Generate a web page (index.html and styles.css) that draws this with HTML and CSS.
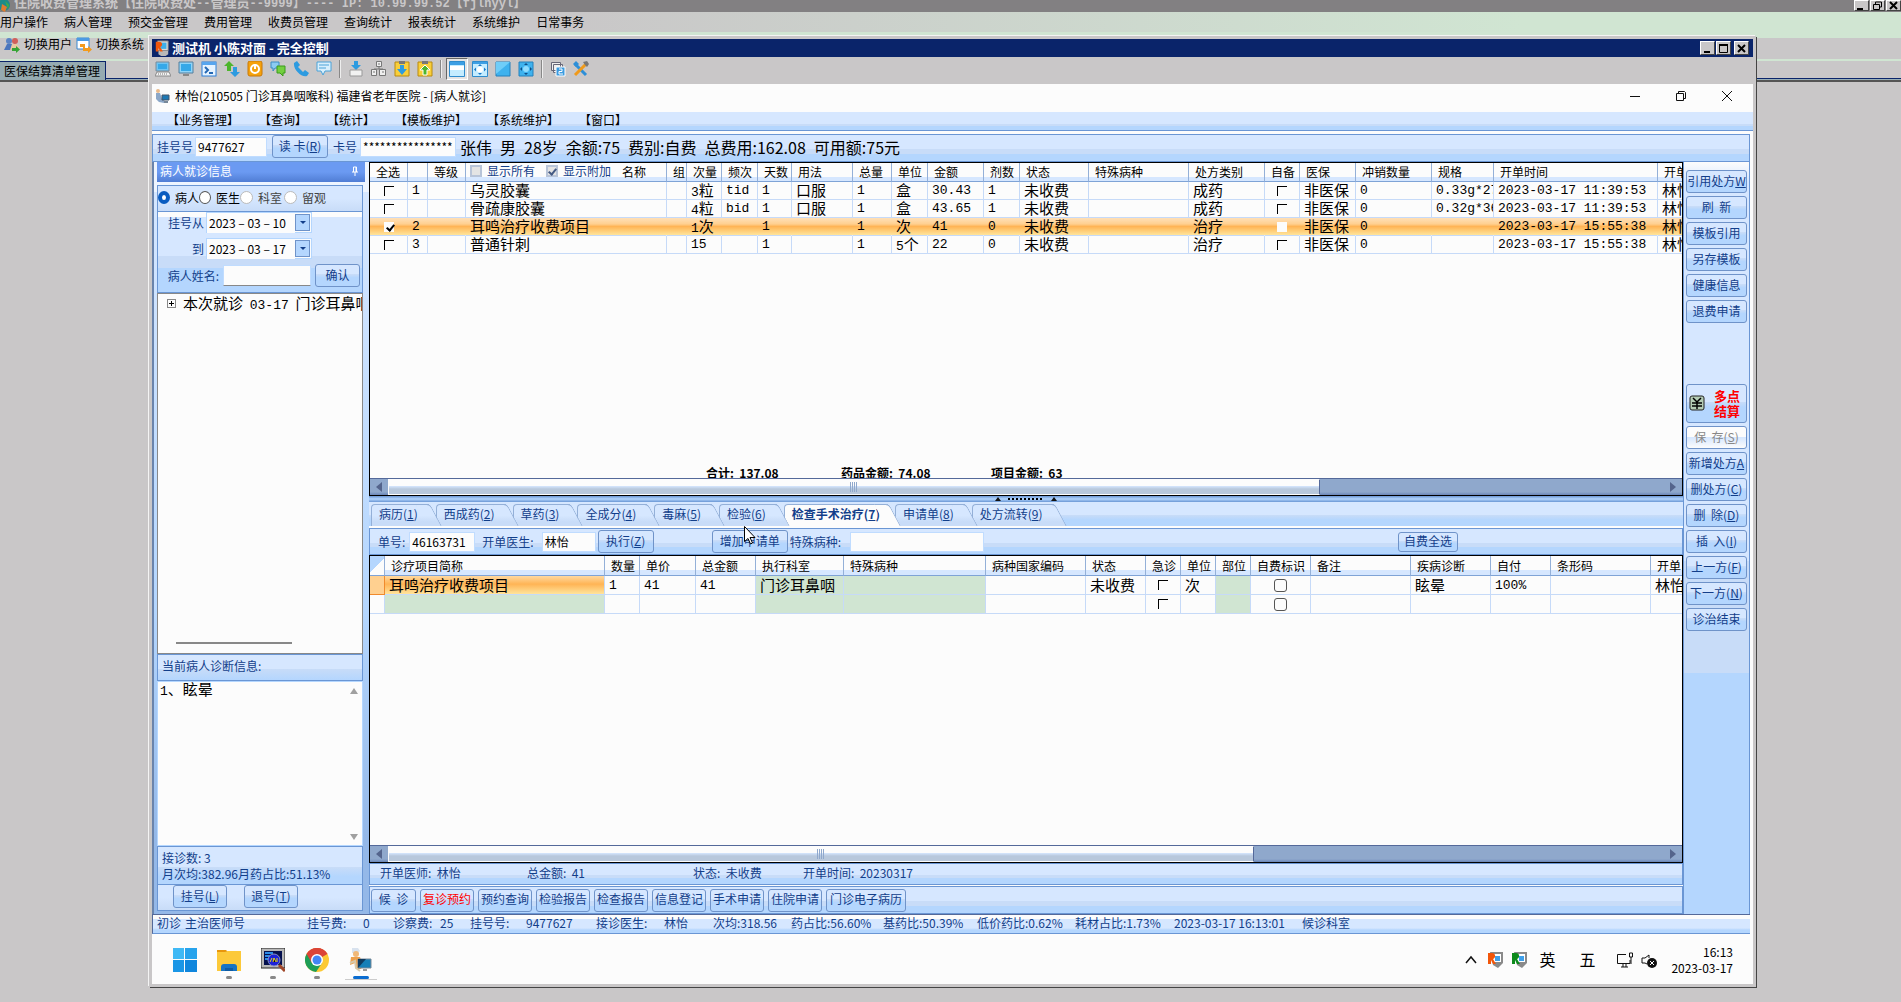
FILE: index.html
```html
<!DOCTYPE html>
<html lang="zh-CN">
<head>
  <meta charset="utf-8">
  <title>住院收费管理系统</title>
  <link rel="stylesheet" href="styles.css">
</head>
<body>
  <!-- 底层：住院收费系统 -->
  <div class="host">
    <div class="host-title">
      <svg class="host-logo" viewBox="0 0 12 12"><circle cx="4" cy="5" r="6" fill="#1d8a8a"/><path d="M2 4l5 3-2 5-4-2z" fill="#e07a30"/><path d="M5 1l4 4-1 4z" fill="#3cae4a"/></svg>
      <b>住院收费管理系统【住院收费处<span class="asc">--</span>管理员<span class="asc">--9999</span>】<span class="asc">---- IP: 10.99.99.52</span>【<span class="asc">fjlnyyl</span>】</b>
      <div class="win-btns host-btns">
        <button aria-label="最小化"><svg viewBox="0 0 11 9"><path d="M1 7h6v2H1z"/></svg></button>
        <button aria-label="还原"><svg viewBox="0 0 11 9"><path d="M3.500 3V1h6v5H8M1.500 3.500h6v5h-6z" fill="none" stroke="#000"/></svg></button>
        <button aria-label="关闭"><svg viewBox="0 0 11 9"><path d="M2 1l7 7M9 1L2 8" stroke="#000" stroke-width="2"/></svg></button>
      </div>
    </div>
    <div class="host-menu">
      <span>用户操作</span><span>病人管理</span><span>预交金管理</span><span>费用管理</span><span>收费员管理</span><span>查询统计</span><span>报表统计</span><span>系统维护</span><span>日常事务</span>
    </div>
    <div class="host-tools">
      <svg viewBox="0 0 16 16"><circle cx="5" cy="4" r="3" fill="#5b84c4"/><path d="M0 13l3-6h5l2 6z" fill="#4a76bd"/><circle cx="11" cy="4" r="3" fill="#d0605a"/><path d="M6 13l2-6h5l3 5z" fill="#e9c9a0"/><path d="M8 11h4V9l4 3.500-4 3.500v-2H8z" fill="#35a535"/></svg>
      <span>切换用户</span>
      <svg viewBox="0 0 16 16"><path d="M1 1h12v11H1z" fill="#fff" stroke="#3a86d0"/><path d="M1 1h12v3H1z" fill="#4b9be4"/><path d="M4 7h5v4h3V9l4 3.500-4 3.500v-2H7v-4H4z" fill="#f39a1c"/></svg>
      <span>切换系统</span>
    </div>
    <div class="host-tabs"><span>医保结算清单管理</span></div>
  </div>

  <!-- 远程控制窗口 -->
  <div class="remote">
    <div class="remote-title">
      <svg viewBox="0 0 16 18"><path d="M3 1h12v11H3z" fill="#d9d9d9" stroke="#777"/><path d="M6 3h7v7H6z" fill="#3fb0ea"/><path d="M4 12h11v4l-3 2H7l-3-2z" fill="#b8b8b8"/><path d="M1 13V2h4c4 0 4 5 1 6l3 5H6L4 9v4z" fill="#f2560a"/></svg>
      <b>测试机 小陈对面 - 完全控制</b>
      <div class="win-btns">
        <button aria-label="最小化"><svg viewBox="0 0 11 9"><path d="M2 7h6v2H2z"/></svg></button>
        <button aria-label="最大化"><svg viewBox="0 0 11 9"><path d="M1.500 1h8v7.500h-8z" fill="none" stroke="#000"/><path d="M1 0h9v2H1z"/></svg></button>
        <button class="gap" aria-label="关闭"><svg viewBox="0 0 11 9"><path d="M2 1l7 7M9 1L2 8" stroke="#000" stroke-width="2"/></svg></button>
      </div>
    </div>
    <div class="remote-tools">
      <svg viewBox="0 0 16 16"><path d="M1 1h13v9H1z" fill="#6fc4f2" stroke="#7a8a98"/><path d="M3 3h9v5H3z" fill="#35a8e8"/><path d="M2 11h12l2 4H0z" fill="#f4f4f4" stroke="#888"/><path d="M3 13h9" stroke="#777" stroke-dasharray="1 1"/></svg>
      <svg viewBox="0 0 16 16"><path d="M1 1h14v11H1z" fill="#8fd4f8" stroke="#557f9d"/><path d="M3 3h10v7H3z" fill="#35a8e8"/><path d="M5 14h6" stroke="#888" stroke-width="2"/></svg>
      <svg viewBox="0 0 16 16"><rect x="1" y="1" width="14" height="14" fill="#e6f3ff" stroke="#2c7fd8"/><path d="M1 1h14v3H1z" fill="#57a5ee"/><path d="M4 6l3 3-3 3M8 12h4" fill="none" stroke="#2468b4" stroke-width="2"/></svg>
      <svg viewBox="0 0 16 16"><path d="M5 0l5 5H7v5H3V5H0z" fill="#4db52c"/><path d="M11 16l-5-5h3V6h4v5h3z" fill="#2d9be0"/></svg>
      <svg viewBox="0 0 16 16"><rect x="1" y="0" width="14" height="15" rx="2" fill="#f5a20c" stroke="#c87808"/><circle cx="8" cy="8" r="4" fill="none" stroke="#fff" stroke-width="2"/><path d="M8 3v5" stroke="#fff" stroke-width="2"/></svg>
      <svg viewBox="0 0 16 16"><path d="M1 1h8v6H5l-2 3V7H1z" fill="#8ccbf2" stroke="#3b8cc4"/><path d="M7 5h8v7h-2v3l-3-3H7z" fill="#73cf3f" stroke="#3a9a1c"/></svg>
      <svg viewBox="0 0 16 16"><path d="M1 2l3-2 3 4-2 2 5 5 2-2 4 3-2 3c-5 2-14-6-13-13z" fill="#2d9be0"/></svg>
      <svg viewBox="0 0 16 16"><path d="M1 1h14v9H9l-2 4-2-4H1z" fill="#d8effc" stroke="#4aa2d8"/><path d="M3 4h10M3 7h7" stroke="#4aa2d8"/></svg>
      <i class="sep"></i>
      <svg viewBox="0 0 16 16"><path d="M6 0h4v4h3L8 9 3 4h3z" fill="#2d9be0"/><path d="M2 9h12v6H2z" fill="#f2f2f2" stroke="#999"/></svg>
      <svg viewBox="0 0 16 16"><g fill="#eee" stroke="#777"><path d="M5.500.500h5v5h-5zM.500 8.500h5v6h-5zM8.500 8.500h6v6h-6z"/></g><path d="M8 6v2M3 8h9M7 3h2M2 11h2M11 11h2" stroke="#777"/></svg>
      <svg viewBox="0 0 16 16"><path d="M1 1h14v14H1z" fill="#f9cf3a" stroke="#b88a10"/><path d="M5 0h6v3H5z" fill="#777"/><path d="M6 4h4v4h3l-5 6-5-6h3z" fill="#2d9be0"/></svg>
      <svg viewBox="0 0 16 16"><path d="M1 1h14v14H1z" fill="#f9cf3a" stroke="#b88a10"/><path d="M5 0h6v3H5z" fill="#777"/><path d="M8 4l5 5h-3v5H6V9H3z" fill="#4db52c" stroke="#fff"/></svg>
      <i class="sep"></i>
      <span class="pressed"><svg viewBox="0 0 16 16"><path d="M.500.500h15v15H.500z" fill="#c4ecff" stroke="#2f8ccd"/><path d="M1 1h14v3H1z" fill="#3d9fe4"/><path d="M1 5h14v4H1z" fill="#fff"/></svg></span>
      <svg viewBox="0 0 16 16"><path d="M.500.500h15v15H.500z" fill="#c4ecff" stroke="#2f8ccd"/><path d="M1 1h14v2H1z" fill="#3d9fe4"/><path d="M8 3l2 2H6zM8 14l2-2H6zM2 8.500l2-2v4zM14 8.500l-2-2v4z" fill="#1878c8"/><circle cx="8" cy="8.500" r="3" fill="#fff"/></svg>
      <svg viewBox="0 0 16 16"><path d="M1 1h14v14H1z" fill="#3fb2ee" stroke="#2480bc"/><path d="M1 1h14L1 13z" fill="#6fcdf8"/></svg>
      <svg viewBox="0 0 16 16"><path d="M1 1h14v14H1z" fill="#3fb2ee" stroke="#2480bc"/><path d="M8 2l2 2H6zM8 14l2-2H6zM2 8l2-2v4zM14 8l-2-2v4z" fill="#104e88"/><circle cx="8" cy="8" r="3" fill="#8fdcff"/></svg>
      <i class="sep"></i>
      <svg viewBox="0 0 16 16"><path d="M1.500 1.500h9v8h-9zM3.500 3.500h9v8h-9z" fill="#eee" stroke="#667"/><path d="M6 6h9v9H6z" fill="#3b9be0" stroke="#fff"/><path d="M9 8h3v2.500H9V13h4" fill="none" stroke="#fff"/></svg>
      <svg viewBox="0 0 16 16"><path d="M2 3l11 11" stroke="#2d8fd8" stroke-width="3"/><path d="M0 3l3-3 3 3-3 3z" fill="#2d8fd8"/><path d="M14 2L2 14" stroke="#f09a1a" stroke-width="3"/><path d="M10 1l4-1 2 3-2 3-2-2z" fill="#777"/></svg>
    </div>

    <div class="app-title">
      <svg viewBox="0 0 16 16"><circle cx="4" cy="3" r="2" fill="#e8b98a"/><path d="M2 5h4l2 6 3 2-1 2-5-1-3-3z" fill="#8ba7c8"/><path d="M8 7h7v5H8z" fill="#1c78b4" stroke="#456"/><path d="M10 13h4v2h-4z" fill="#789"/></svg>
      <span>林怡(210505 门诊耳鼻咽喉科) 福建省老年医院 - [病人就诊]</span>
      <div class="app-ctrl">
        <svg viewBox="0 0 12 12"><path d="M1 6.500h10" stroke="#111"/></svg>
        <svg viewBox="0 0 12 12"><path d="M1.500 3.500h7v7h-7zM3.500 3V1.500h6l1 1v6H9" fill="none" stroke="#111"/></svg>
        <svg viewBox="0 0 12 12"><path d="M1 1l10 10M11 1L1 11" stroke="#111"/></svg>
      </div>
    </div>
    <div class="app-menu">
      <span>【业务管理】</span><span>【查询】</span><span>【统计】</span><span>【模板维护】</span><span>【系统维护】</span><span>【窗口】</span>
    </div>

    <div class="patient bar">
      <label for="regno">挂号号</label><input id="regno" class="w-reg" type="text" value="9477627">
      <button class="btn">读 卡(<u>R</u>)</button>
      <label for="card">卡号</label><input id="card" class="w-card" type="text" value="****************">
      <div class="who"><span>张伟</span><span>男</span><span>28岁</span><span>余额:75</span><span>费别:自费</span><span>总费用:162.08</span><span>可用额:75元</span></div>
    </div>

    <div class="body">
      <aside class="left">
        <div class="left-head"><span>病人就诊信息</span><svg viewBox="0 0 8 10"><path d="M1 6h6M2.500 6V1h3v5M5 1v5M4 6v4" stroke="#fff" fill="none"/></svg></div>
        <div class="kinds">
          <label><input type="radio" name="kind" checked>病人</label>
          <label><input type="radio" name="kind">医生</label>
          <label class="off"><input type="radio" name="kind" disabled>科室</label>
          <label class="off"><input type="radio" name="kind" disabled>留观</label>
        </div>
        <div class="query">
          <label for="from">挂号从</label>
          <div class="date"><input id="from" type="text" value="2023 – 03 – 10"><button aria-label="选择日期"></button></div>
          <label for="to">到</label>
          <div class="date"><input id="to" type="text" value="2023 – 03 – 17"><button aria-label="选择日期"></button></div>
          <label for="pname">病人姓名:</label>
          <div class="name-row"><input id="pname" type="text"><button class="btn">确认</button></div>
        </div>
        <div class="tree">
          <div class="node"><i class="plus"></i><span>本次就诊&nbsp; <span class="num">03-17</span>&nbsp; 门诊耳鼻咽</span></div>
          <div class="tree-scroll"></div>
        </div>
        <div class="diag-head">当前病人诊断信息:</div>
        <div class="diag"><span><span class="num">1</span>、眩晕</span><i class="up"></i><i class="down"></i></div>
        <div class="stat"><div>接诊数: 3</div><div>月次均:382.96月药占比:51.13%</div></div>
        <div class="left-btns"><button class="btn">挂号(<u>L</u>)</button><button class="btn">退号(<u>T</u>)</button></div>
      </aside>

      <main class="main">
        <section class="grid-box top">
          <table class="orders">
            <colgroup><col class="c38"><col class="c20"><col class="c38"><col class="c201"><col class="c20"><col class="c35"><col class="c36"><col class="c34"><col class="c61"><col class="c39"><col class="c36"><col class="c56"><col class="c36"><col class="c69"><col class="c100"><col class="c76"><col class="c35"><col class="c56"><col class="c76"><col class="c62"><col class="c164"><col></colgroup>
            <thead>
              <tr><th>全选</th><th></th><th>等级</th><th class="name-th"><div><label><input type="checkbox" class="box">显示所有</label><label><input type="checkbox" class="box" checked>显示附加</label><span>名称</span></div></th><th>组</th><th>次量</th><th>频次</th><th>天数</th><th>用法</th><th>总量</th><th>单位</th><th>金额</th><th>剂数</th><th>状态</th><th>特殊病种</th><th>处方类别</th><th>自备</th><th>医保</th><th>冲销数量</th><th>规格</th><th>开单时间</th><th>开单</th></tr>
            </thead>
            <tbody>
              <tr><td class="ck"><input type="checkbox" aria-label="选择"></td><td class="num">1</td><td></td><td>乌灵胶囊</td><td></td><td><span class="num">3</span>粒</td><td class="num">tid</td><td class="num">1</td><td>口服</td><td class="num">1</td><td>盒</td><td class="num">30.43</td><td class="num">1</td><td>未收费</td><td></td><td>成药</td><td class="ck"><input type="checkbox" aria-label="自备"></td><td>非医保</td><td class="num">0</td><td class="num">0.33g*27</td><td class="num">2023-03-17 11:39:53</td><td>林怡</td></tr>
              <tr><td class="ck"><input type="checkbox" aria-label="选择"></td><td></td><td></td><td>骨疏康胶囊</td><td></td><td><span class="num">4</span>粒</td><td class="num">bid</td><td class="num">1</td><td>口服</td><td class="num">1</td><td>盒</td><td class="num">43.65</td><td class="num">1</td><td>未收费</td><td></td><td>成药</td><td class="ck"><input type="checkbox" aria-label="自备"></td><td>非医保</td><td class="num">0</td><td class="num">0.32g*36</td><td class="num">2023-03-17 11:39:53</td><td>林怡</td></tr>
              <tr class="sel"><td class="ck"><input type="checkbox" aria-label="选择" checked></td><td class="num">2</td><td></td><td>耳鸣治疗收费项目</td><td></td><td><span class="num">1</span>次</td><td></td><td class="num">1</td><td></td><td class="num">1</td><td>次</td><td class="num">41</td><td class="num">0</td><td>未收费</td><td></td><td>治疗</td><td class="ck"><input type="checkbox" aria-label="自备"></td><td>非医保</td><td class="num">0</td><td></td><td class="num">2023-03-17 15:55:38</td><td>林怡</td></tr>
              <tr><td class="ck"><input type="checkbox" aria-label="选择"></td><td class="num">3</td><td></td><td>普通针刺</td><td></td><td class="num">15</td><td></td><td class="num">1</td><td></td><td class="num">1</td><td><span class="num">5</span>个</td><td class="num">22</td><td class="num">0</td><td>未收费</td><td></td><td>治疗</td><td class="ck"><input type="checkbox" aria-label="自备"></td><td>非医保</td><td class="num">0</td><td></td><td class="num">2023-03-17 15:55:38</td><td>林怡</td></tr>
            </tbody>
          </table>
          <div class="totals"><span>合计:&nbsp; 137.08</span><span>药品金额:&nbsp; 74.08</span><span>项目金额:&nbsp; 63</span></div>
          <div class="hscroll"><i class="arr l"></i><div class="thumb long"><i></i></div><i class="arr r"></i></div>
        </section>

        <div class="splitter"><i></i><b></b><i></i></div>

        <nav class="tabs">
          <button>病历(<u>1</u>)</button><button>西成药(<u>2</u>)</button><button>草药(<u>3</u>)</button><button>全成分(<u>4</u>)</button><button>毒麻(<u>5</u>)</button><button>检验(<u>6</u>)</button><button class="on">检查手术治疗(<u>7</u>)</button><button>申请单(<u>8</u>)</button><button>处方流转(<u>9</u>)</button>
        </nav>
        <div class="sheet bar">
          <label for="no">单号:</label><input id="no" class="w-no" type="text" value="46163731">
          <label for="doc">开单医生:</label><input id="doc" class="w-doc" type="text" value="林怡">
          <button class="btn">执行(<u>Z</u>)</button>
          <div class="add"><button class="btn">增加申请单</button>
            <svg class="cursor" viewBox="0 0 12 19"><path d="M.500.500v15l3.500-3 2.500 5.500 2-1-2.500-5.500h5z" fill="#fff" stroke="#000"/></svg></div>
          <label for="dis">特殊病种:</label><input id="dis" class="w-dis" type="text">
          <button class="btn self">自费全选</button>
        </div>

        <section class="grid-box low">
          <table class="items">
            <colgroup><col class="c15"><col class="c220"><col class="c35"><col class="c56"><col class="c60"><col class="c88"><col class="c142"><col class="c100"><col class="c60"><col class="c35"><col class="c35"><col class="c35"><col class="c60"><col class="c100"><col class="c80"><col class="c60"><col class="c100"><col></colgroup>
            <thead>
              <tr><th class="corner"></th><th>诊疗项目简称</th><th>数量</th><th>单价</th><th>总金额</th><th>执行科室</th><th>特殊病种</th><th>病种国家编码</th><th>状态</th><th>急诊</th><th>单位</th><th>部位</th><th>自费标识</th><th>备注</th><th>疾病诊断</th><th>自付</th><th>条形码</th><th>开单</th></tr>
            </thead>
            <tbody>
              <tr><td class="mark"></td><td class="hot">耳鸣治疗收费项目</td><td class="num">1</td><td class="num">41</td><td class="num">41</td><td class="green">门诊耳鼻咽</td><td class="green"></td><td></td><td>未收费</td><td class="ck"><input type="checkbox" aria-label="急诊"></td><td>次</td><td class="green"></td><td class="ck"><input type="checkbox" class="round" aria-label="自费标识"></td><td></td><td>眩晕</td><td class="num">100%</td><td></td><td>林怡</td></tr>
              <tr><td></td><td class="green"></td><td></td><td></td><td></td><td class="green"></td><td class="green"></td><td></td><td></td><td class="ck"><input type="checkbox" aria-label="急诊"></td><td></td><td class="green"></td><td class="ck"><input type="checkbox" class="round" aria-label="自费标识"></td><td></td><td></td><td></td><td></td><td></td></tr>
            </tbody>
          </table>
          <div class="hscroll"><i class="arr l"></i><div class="thumb short"><i></i></div><i class="arr r"></i></div>
        </section>
        <div class="info bar"><span>开单医师: &nbsp;林怡</span><span>总金额: &nbsp;41</span><span>状态: &nbsp;未收费</span><span>开单时间: &nbsp;20230317</span></div>
        <div class="actions bar">
          <button class="btn narrow">候&nbsp; 诊</button><button class="btn red">复诊预约</button><button class="btn">预约查询</button><button class="btn">检验报告</button><button class="btn">检查报告</button><button class="btn">信息登记</button><button class="btn">手术申请</button><button class="btn">住院申请</button><button class="btn wide">门诊电子病历</button>
        </div>
      </main>

      <aside class="right">
        <div class="right-in">
          <button class="btn">引用处方<u>W</u></button><button class="btn">刷&nbsp; 新</button><button class="btn">模板引用</button><button class="btn">另存模板</button><button class="btn">健康信息</button><button class="btn">退费申请</button>
          <button class="btn pay"><svg viewBox="0 0 16 16"><rect x="1" y="1" width="14" height="14" rx="2" fill="#b4ccb4" stroke="#222"/><path d="M4 3l4 4 4-4M3 8h10M3 11h10M8 7v7" stroke="#000" stroke-width="1.500" fill="none"/></svg><span>多点<br>结算</span></button>
          <button class="btn off" disabled>保&nbsp; 存(<u>S</u>)</button><button class="btn">新增处方<u>A</u></button><button class="btn">删处方(<u>C</u>)</button><button class="btn">删&nbsp; 除(<u>D</u>)</button><button class="btn">插&nbsp; 入(<u>I</u>)</button><button class="btn">上一方(<u>F</u>)</button><button class="btn">下一方(<u>N</u>)</button><button class="btn">诊治结束</button>
        </div>
      </aside>
    </div>

    <div class="status">
      <span>初诊</span><span>主治医师号</span><span>挂号费:</span><span>0</span><span>诊察费:</span><span>25</span><span>挂号号:</span><span>9477627</span><span>接诊医生:</span><span>林怡</span><span>次均:318.56</span><span>药占比:56.60%</span><span>基药比:50.39%</span><span>低价药比:0.62%</span><span>耗材占比:1.73%</span><span>2023-03-17 16:13:01</span><span>候诊科室</span>
    </div>

    <div class="taskbar">
      <div class="task"><svg viewBox="0 0 24 24"><g fill="#0f86dd"><path d="M0 0h11v11H0z" fill="#3fb9f5"/><path d="M12 0h12v11H12z" fill="#27a3ec"/><path d="M0 12h11v12H0z" fill="#1a96e6"/><path d="M12 12h12v12H12z"/></g></svg></div>
      <div class="task run"><svg viewBox="0 0 24 24"><path d="M0 2h9l3 3H0z" fill="#e8960c"/><path d="M0 4h8l3-1h13v20H0z" fill="#fcc93a"/><path d="M4 23v-4q0-3 3-3h10q3 0 3 3v4z" fill="#1673c4"/><path d="M8 20h8v3H8z" fill="#0d5ba4"/></svg></div>
      <div class="task run"><svg viewBox="0 0 24 24"><path d="M0 0h24v20H0z" fill="#b8b8b8" stroke="#222"/><path d="M3 3h18v14H3z" fill="#04104e"/><path d="M4 5h8M4 8h5M4 11h5" stroke="#2b8be8" stroke-width="2"/><circle cx="13" cy="12" r="6" fill="#1b22d8" stroke="#8890c8"/><path d="M9 14l2-4M12 14l1-4 2 4M16 10v4" stroke="#e8d820"/><path d="M18 17l6 6" stroke="#a04628" stroke-width="3"/></svg></div>
      <div class="task run"><svg viewBox="0 0 24 24"><circle cx="12" cy="12" r="12" fill="#fcc934"/><path d="M12 12L1.600 6A12 12 0 0 1 22.400 6z" fill="#db4437"/><path d="M12 12L1.600 6A12 12 0 0 0 11 24l6-9z" fill="#1e9e57"/><path d="M12 6h10.400A12 12 0 0 0 1.600 6l5.200 9z" fill="#db4437"/><circle cx="12" cy="12" r="6" fill="#fff"/><circle cx="12" cy="12" r="4.500" fill="#4285f4"/></svg></div>
      <div class="task cur"><svg viewBox="0 0 24 24"><path d="M3 0h6l2 3-2 2H3z" fill="#d8e2ee"/><circle cx="7" cy="6" r="3" fill="#f0b878"/><path d="M2 9h9l3 8-2 4H7l-1-6-5 2z" fill="#eda04c"/><path d="M1 15l5-2 1 7 4 3" stroke="#d8c8a8" fill="none" stroke-width="2"/><path d="M9 11h13v9H9z" fill="#147fb8" stroke="#7a8a98"/><path d="M9 20l8-9h-8z" fill="#0f3b60"/><path d="M14 21h4v2h-4z" fill="#999"/></svg></div>
      <div class="tray">
        <svg class="chev" viewBox="0 0 12 16"><path d="M1 11l5-6 5 6" fill="none" stroke="#111" stroke-width="1.500"/></svg>
        <svg viewBox="0 0 16 16"><path d="M3 0h13v11l-5 5-5-3z" fill="#8a8a8a"/><path d="M6 2h8v8H6z" fill="#fff"/><path d="M8 4h5v5H8z" fill="#3fa0ea"/><path d="M1 12V1h4c4 0 4 5 1 6l3 5H6L4 8v4z" fill="#f2560a"/></svg>
        <svg viewBox="0 0 16 16"><path d="M3 0h13v11l-5 5-5-3z" fill="#8a8a8a"/><path d="M6 2h8v8H6z" fill="#fff"/><path d="M8 4h5v5H8z" fill="#3fa0ea"/><path d="M1 12V1h4c4 0 4 5 1 6l3 5H6L4 8v4z" fill="#0d8a1c"/></svg>
        <span>英</span><span>五</span>
        <svg viewBox="0 0 16 16"><path d="M9 2.500H.500v9H13V8M4 15h7M6 12v3M9 12v3M12.500 1h3v4h-3zM14 5v7" fill="none" stroke="#111"/></svg>
        <svg viewBox="0 0 16 16"><path d="M1 6h3l4-3v3M1 6v5h3l2 1" fill="none" stroke="#111"/><circle cx="11" cy="11" r="5" fill="#111"/><path d="M9 9l4 4M13 9l-4 4" stroke="#fff"/></svg>
        <div class="clock">16:13<br>2023-03-17</div>
      </div>
    </div>
  </div>
</body>
</html>
```

FILE: styles.css
```css
* {
  box-sizing: border-box;
}

body {
  margin: 0;
  height: 100vh;
  overflow: hidden;
  background: #c9c7c8;
  color: #000;
  font: 12px/16px "Noto Sans CJK SC", sans-serif;
  white-space: nowrap;
}

button, input {
  font: inherit;
  color: inherit;
  margin: 0;
}

svg {
  display: block;
  width: 16px;
  height: 16px;
  flex: none;
}

.num {
  font: 13px/16px "Liberation Mono", monospace;
}

span.num {
  line-height: 0;
}

/* 底层窗口 */
.host-title {
  display: flex;
  align-items: center;
  height: 12px;
  background: #828082;
  color: #c9c7c8;
  font-size: 13px;
  line-height: 12px;
}

.host-title b {
  margin-top: -6px;
}

.host-title .asc {
  font: bold 12px/12px "Liberation Mono", monospace;
  white-space: pre;
}

.host-logo {
  width: 12px;
  height: 12px;
  margin-right: 2px;
}

.host-btns {
  height: 12px;
}

.host-menu {
  display: flex;
  gap: 16px;
  height: 26px;
  padding-top: 2px;
  background: linear-gradient(90deg, #c9c7c8 30%, #d0e5d2 80%);
  border-bottom: 6px solid #d0e5d2;
}

.host-tools {
  display: flex;
  align-items: center;
  gap: 4px;
  height: 21px;
  padding: 0 0 8px 4px;
}

.host-tools span {
  margin-bottom: 1px;
}

.host-tabs {
  height: 23px;
  border-top: 2px solid #d0e5d2;
  border-bottom: 2px solid #555;
  background: linear-gradient(#c9c7c8 17px, #0a246a 17px, #0a246a 18px, #9ab0b8 18px);
}

.host-tabs span {
  display: inline-block;
  width: 106px;
  height: 19px;
  padding-left: 4px;
  line-height: 17px;
  background: #96abb1;
  border: 1px solid #0a246a;
  border-width: 1px 1px 0 0;
}

.win-btns {
  display: flex;
  margin-left: auto;
  gap: 1px;
}

.win-btns button {
  width: 15px;
  height: 14px;
  padding: 1px;
  background: #c9c7c8;
  border: 1px solid;
  border-color: #fff #444 #444 #fff;
}

.host-btns button {
  height: 11px;
  padding: 0 1px;
}

.win-btns svg {
  width: 11px;
  height: 9px;
}

.win-btns .gap {
  margin: 0 4px 0 2px;
}

/* 远程窗口 */
.remote {
  position: absolute;
  left: 149px;
  top: 36px;
  right: 145px;
  bottom: 15px;
  display: flex;
  flex-direction: column;
  background: #fcfcfc;
  border: 3px solid #c9c7c8;
  box-shadow: 1px 1px 0 #444, -1px -1px 0 #f4f4f4;
}

.remote-title {
  display: flex;
  align-items: center;
  height: 18px;
  padding-left: 2px;
  background: #0a246a;
  color: #fff;
  font-size: 13px;
}

.remote-title b {
  margin-left: 2px;
}

.remote-tools {
  display: flex;
  align-items: center;
  gap: 7px;
  height: 27px;
  padding: 0 0 3px 3px;
  background: #c9c7c8;
}

.sep {
  width: 2px;
  height: 18px;
  border-left: 1px solid #888;
  border-right: 1px solid #eee;
}

.pressed {
  padding: 2px;
  margin: 0 -3px;
  border: 1px solid;
  border-color: #666 #fff #fff #666;
  background: #e4e4e4;
}

.app-title {
  display: flex;
  align-items: center;
  gap: 5px;
  height: 28px;
  padding: 0 20px 5px 2px;
}

.app-ctrl {
  display: flex;
  gap: 34px;
  margin-left: auto;
}

.app-ctrl svg {
  width: 12px;
  height: 12px;
}

.app-menu {
  display: flex;
  gap: 20px;
  height: 19px;
  padding-left: 15px;
  background: linear-gradient(#d6e7ff 12px, #c8dcf8 12px, #c8dcf8 14px, #b4d6fe 14px);
  border-bottom: 1px solid #6a96d4;
}

.bar {
  display: flex;
  align-items: center;
  background: linear-gradient(#d6e7ff 55%, #c8dcf8 55%, #c8dcf8 72%, #b4d6fe 72%);
  border: 1px solid #6a96d4;
  color: #123e8a;
}

.bar input, .query input {
  height: 20px;
  padding: 0 2px;
  background: #fcfcfc;
  border: 1px solid #c0dcff;
  color: #000;
  outline: none;
}

.btn {
  height: 23px;
  padding: 0 0 2px;
  text-align: center;
  background: linear-gradient(#d6e7ff 45%, #c8dcf8 45%, #b4d6fe 60%);
  border: 1px solid #6f93c9;
  border-radius: 3px;
  color: #123e8a;
  line-height: 18px;
}

.patient {
  height: 28px;
  margin: 3px 3px 0 0;
  padding: 0 4px 3px;
}

.patient .btn {
  width: 56px;
  margin: 0 5px;
}

.w-reg {
  width: 72px;
  margin-left: 2px;
}

.w-card {
  width: 96px;
  margin: 0 4px 0 3px;
}

.who {
  display: flex;
  gap: 8px;
  color: #000;
  font-size: 16px;
}

.body {
  flex: 1;
  display: grid;
  grid-template-columns: 217px 1fr 70px;
  min-height: 0;
}

/* 左栏 */
.left {
  display: flex;
  flex-direction: column;
  min-height: 0;
  padding: 0 6px 3px 5px;
  background: linear-gradient(#eef5ff 30px, #d6e7ff 30px, #b4d6fe 60%, #94b8e8 90%);
  border-left: 2px solid #6a84ac;
  color: #123e8a;
}

.left > div {
  margin-left: -2px;
}

.left-head {
  display: flex;
  align-items: center;
  justify-content: space-between;
  height: 20px;
  margin-right: -2px;
  padding: 0 6px 3px 3px;
  background: linear-gradient(#6b9af2 50%, #507dd4);
  color: #fff;
}

.left-head svg {
  width: 8px;
  height: 10px;
}

.kinds {
  display: flex;
  align-items: center;
  height: 27px;
  margin-top: 3px;
  padding-bottom: 2px;
  background: linear-gradient(#d6e7ff 50%, #c8dcf8);
  border: 1px solid #6a96d4;
  color: #000;
}

.kinds label {
  display: flex;
  align-items: center;
  gap: 5px;
  width: 41px;
}

.kinds .off {
  width: 44px;
  color: #444;
}

.kinds input {
  appearance: none;
  width: 13px;
  height: 13px;
  border: 1px solid #555;
  border-radius: 50%;
  background: #fff;
}

.kinds input:checked {
  border: 4px solid #0a5cc0;
}

.kinds input:disabled {
  border-color: #bbb;
}

.query {
  display: grid;
  grid-template-columns: 45px 1fr;
  column-gap: 2px;
  row-gap: 5px;
  align-items: center;
  align-content: start;
  height: 81px;
  padding: 0 1px;
  background: linear-gradient(#fcfcfc 5px, #d6e7ff 5px, #d6e7ff 55%, #c8dcf8 55%, #c8dcf8 70%, #b4d6fe 70%);
  border: 1px solid #6a96d4;
  border-top: 0;
}

.query label {
  text-align: right;
}

.date {
  display: flex;
  align-items: center;
  width: 106px;
  height: 21px;
  background: #fcfcfc;
  border: 1px solid #b4d6fe;
}

.date input {
  width: 88px;
  border: 0;
}

.date button {
  width: 15px;
  height: 17px;
  padding: 0;
  background: #b4d6fe;
  border: 1px solid #6f93c9;
}

.date button::after, .splitter i, .up, .down {
  content: "";
  display: block;
  width: 0;
  margin: auto;
  border: 3px solid transparent;
  border-top-color: #123e8a;
  border-bottom: 0;
}

.name-row {
  display: flex;
  align-items: center;
  gap: 4px;
}

.query .name-row input {
  width: 88px;
  margin-left: 17px;
  height: 21px;
  border-bottom-color: #888;
}

.query label[for="pname"] {
  width: 60px;
}

.name-row .btn {
  width: 45px;
}

.tree {
  flex: 359 1 0;
  display: flex;
  flex-direction: column;
  justify-content: space-between;
  padding: 0 0 9px;
  background: #fcfcfc;
  border: 1px solid #888;
  overflow: hidden;
}

.node {
  display: flex;
  align-items: center;
  gap: 7px;
  padding-left: 9px;
  color: #000;
  font-size: 15px;
  line-height: 18px;
}

.plus {
  width: 9px;
  height: 9px;
  flex: none;
  border: 1px solid #888;
  background: linear-gradient(#000, #000) center/5px 1px no-repeat, linear-gradient(#000, #000) center/1px 5px no-repeat;
}

.tree-scroll {
  width: 116px;
  height: 2px;
  margin-left: 18px;
  background: #888;
}

.diag-head {
  height: 27px;
  padding: 3px 4px;
  background: linear-gradient(#d6e7ff 55%, #c8dcf8 55%, #b4d6fe);
  border: 1px solid #6a96d4;
}

.diag {
  flex: 167 1 0;
  position: relative;
  padding-left: 2px;
  background: #fcfcfc;
  border: 1px solid #b4d6fe;
  color: #000;
  font-size: 15px;
  line-height: 14px;
}

.up, .down {
  position: absolute;
  right: 4px;
  border: 4px solid transparent;
  border-width: 6px 4px 0;
  border-top-color: #a0a0a0;
}

.up {
  top: 6px;
  transform: rotate(180deg);
}

.down {
  bottom: 5px;
}

.stat {
  height: 39px;
  padding: 3px 4px;
  background: linear-gradient(#d6e7ff 55%, #c8dcf8 55%, #b4d6fe 80%);
  border: 1px solid #6a96d4;
  line-height: 16px;
}

.left-btns {
  display: flex;
  gap: 17px;
  height: 26px;
  padding: 0 15px;
  background: linear-gradient(#d6e7ff 50%, #c8dcf8);
  border: 1px solid #6a96d4;
  border-top: 0;
}

.left-btns .btn {
  width: 54px;
}

/* 中间 */
.main {
  display: flex;
  flex-direction: column;
  min-width: 0;
  min-height: 0;
}

.grid-box {
  display: flex;
  flex-direction: column;
  min-height: 0;
  background: #fcfcfc;
  border: 1px solid #000;
  overflow: hidden;
}

.top {
  flex: 335 1 0;
}

.low {
  flex: 308 1 0;
}

table {
  width: 100%;
  table-layout: fixed;
  border-collapse: separate;
  border-spacing: 0;
}

th, td {
  padding: 0;
  text-align: left;
  font-weight: normal;
  overflow: hidden;
}

th {
  height: 19px;
  padding-left: 6px;
  line-height: 18px;
  background: linear-gradient(#fcfcfc 14px, #d6e7ff 14px);
  border-right: 1px solid #94b0d8;
  border-bottom: 1px solid #7fa3d6;
}

td {
  height: 18px;
  padding-left: 4px;
  font-size: 15px;
  line-height: 15px;
  padding-bottom: 2px;
  border-right: 1px solid #c6daf8;
  border-bottom: 1px solid #c6daf8;
}

td.num {
  padding-bottom: 0;
  line-height: 17px;
}

.items th {
  height: 20px;
}

.items td {
  height: 19px;
}

.name-th {
  padding-left: 4px;
}

.name-th div {
  display: flex;
  height: 18px;
}

.name-th label {
  display: flex;
  align-items: center;
  gap: 5px;
  width: 76px;
  line-height: 14px;
  padding-bottom: 2px;
  color: #123e8a;
}

th:last-child, td:last-child {
  border-right: 0;
}

td.ck {
  padding: 0;
  text-align: center;
  line-height: 0;
}

td input {
  appearance: none;
  width: 10px;
  height: 10px;
  border: 1px solid #000;
  border-width: 1px 0 0 1px;
}

.sel td {
  border-right-color: transparent;
  background: linear-gradient(#ffe0b8, #ffd090 35%, #ffb455 50%, #ffc870 70%, #ffe49c);
}

.sel input {
  background: #fcfcfc;
  border-color: #fcfcfc;
}

.sel input:checked::after, .box:checked::after {
  content: "";
  display: block;
  width: 3px;
  height: 6px;
  margin-left: 3px;
  border: solid #000;
  border-width: 0 2px 2px 0;
  transform: rotate(40deg);
}

.box {
  appearance: none;
  width: 12px;
  height: 12px;
  border: 2px solid #b8c4d8;
  background: #e4e4e4;
}

.box:checked::after {
  margin-left: 2px;
  border-color: #445a84;
}

td input.round {
  width: 13px;
  height: 13px;
  border: 1px solid #555;
  border-radius: 3px;
}

.corner {
  background: linear-gradient(135deg, #b4d6fe 50%, #fcfcfc 50%);
}

.mark {
  background: #ffd090;
  border-color: #f08a2c;
}

.hot {
  background: linear-gradient(#ffd9a0, #ffb455 45%, #ffe49c);
}

.green {
  background: #d0e5d2;
}

.c15 { width: 15px; }
.c20 { width: 20px; }
.c34 { width: 34px; }
.c35 { width: 35px; }
.c36 { width: 36px; }
.c38 { width: 38px; }
.c39 { width: 39px; }
.c56 { width: 56px; }
.c60 { width: 60px; }
.c61 { width: 61px; }
.c62 { width: 62px; }
.c69 { width: 69px; }
.c76 { width: 76px; }
.c80 { width: 80px; }
.c88 { width: 88px; }
.c100 { width: 100px; }
.c142 { width: 142px; }
.c164 { width: 164px; }
.c201 { width: 201px; }
.c220 { width: 220px; }

.totals {
  display: grid;
  grid-template-columns: 135px 150px 1fr;
  height: 13px;
  margin-top: auto;
  padding-left: 336px;
  font-weight: bold;
  overflow: hidden;
}

.hscroll {
  display: flex;
  align-items: center;
  height: 17px;
  background: linear-gradient(#8fa8cc 13px, #6a86b8);
  border-top: 1px solid #54699a;
}

.low .hscroll {
  margin-top: auto;
}

.arr {
  width: 6px;
  margin: 0 6px;
  border: 5px solid transparent;
  border-left: 0;
  border-right: 6px solid #54648c;
}

.arr.r {
  margin-left: auto;
  transform: rotate(180deg);
}

.thumb {
  display: flex;
  justify-content: center;
  align-items: center;
  width: 71%;
  height: 16px;
  background: linear-gradient(#fcfcfc 6px, #d6e7ff 6px, #b8c8dc 9px);
  border: 1px solid #fcfcfc;
  border-right-color: #54699a;
}

.thumb.short {
  width: 66%;
}

.thumb i {
  width: 8px;
  height: 10px;
  background: repeating-linear-gradient(90deg, #8fa8cc 0, #8fa8cc 1px, transparent 1px, transparent 2px);
}

.splitter {
  display: flex;
  justify-content: center;
  align-items: center;
  gap: 7px;
  height: 6px;
  background: linear-gradient(#6a96d4, #b4d6fe, #6a96d4);
}

.splitter i {
  margin: 0;
  border: 3px solid transparent;
  border-top: 0;
  border-bottom: 4px solid #111;
}

.splitter b {
  width: 36px;
  height: 2px;
  background: repeating-linear-gradient(90deg, #000 0, #000 2px, transparent 2px, transparent 4px);
}

.tabs {
  display: flex;
  align-items: flex-end;
  height: 26px;
  padding-left: 2px;
  background: linear-gradient(#d6e7ff 55%, #c8dcf8 55%, #b4d6fe 75%);
  border-bottom: 2px solid #fcfcfc;
}

.tabs button {
  position: relative;
  height: 22px;
  margin-right: 7px;
  padding: 0 11px 3px 7px;
  background: linear-gradient(#d6e7ff 50%, #c8dcf8 80%);
  border: 1px solid #94b0d8;
  border-width: 1px 0 0 1px;
  border-radius: 4px 0 0 0;
  color: #123e8a;
  line-height: 16px;
}

.tabs button::after {
  content: "";
  position: absolute;
  top: -1px;
  bottom: 0;
  right: -7px;
  width: 14px;
  background: inherit;
  border: 1px solid #94b0d8;
  border-width: 1px 1px 0 0;
  border-radius: 0 4px 0 0;
  transform: skewX(28deg);
  z-index: 1;
}

.tabs button u {
  position: relative;
  z-index: 2;
}

.tabs .on {
  padding-right: 8px;
  background: #fcfcfc;
  font-weight: bold;
}

.sheet {
  height: 27px;
  padding: 0 8px;
}

.sheet .btn {
  width: 56px;
  margin: 0 2px;
}

.w-no {
  width: 66px;
  margin: 0 7px 0 4px;
}

.w-doc {
  width: 54px;
  margin-left: 8px;
}

.w-dis {
  width: 134px;
  margin-left: 9px;
}

.add {
  position: relative;
  margin-left: 54px;
}

.add .btn {
  width: 76px;
}

.cursor {
  position: absolute;
  left: 34px;
  top: -4px;
  width: 12px;
  height: 19px;
  z-index: 3;
}

.sheet .self {
  width: 60px;
  height: 20px;
  margin: 0 216px 0 auto;
  line-height: 16px;
}

.info {
  display: grid;
  grid-template-columns: 147px 166px 110px 1fr;
  height: 22px;
  padding: 0 0 2px 10px;
}

.actions {
  gap: 4px;
  height: 28px;
  margin-top: 1px;
  padding-left: 1px;
}

.actions .btn {
  width: 54px;
}

.actions .narrow {
  width: 45px;
}

.actions .wide {
  width: 80px;
}

.actions .red {
  color: #f00;
}

/* 右栏 */
.right {
  padding-right: 3px;
}

.right-in {
  display: flex;
  flex-direction: column;
  gap: 3px;
  height: 100%;
  padding: 8px 2px 0;
  background: linear-gradient(#fcfcfc, #d6e7ff 20px, #d6e7ff 53%, #c8dcf8 53%, #c8dcf8 68%, #b4d6fe 68%);
  border: 1px solid #6a96d4;
  border-width: 0 1px;
}

.right .pay {
  display: flex;
  align-items: center;
  gap: 9px;
  height: 39px;
  margin-top: 58px;
  padding-left: 2px;
  color: #f00;
  font-weight: bold;
  font-size: 13px;
  line-height: 15px;
}

.right .off {
  background: linear-gradient(#fcfcfc 50%, #d6e7ff 50%, #fcfcfc);
  color: #888;
}

.status {
  display: grid;
  grid-template-columns: 28px 122px 56px 30px 47px 30px 56px 70px 68px 49px 78px 92px 94px 98px 99px 128px 1fr;
  align-items: center;
  height: 20px;
  margin-right: 3px;
  padding: 0 0 2px 4px;
  border: 1px solid #54699a;
  border-bottom-color: #6a96d4;
  border-right: 0;
  background: linear-gradient(#fcfcfc 4px, #d6e7ff 4px, #d6e7ff 13px, #b4d6fe 15px);
  color: #123e8a;
}

.taskbar {
  display: flex;
  align-items: center;
  height: 50px;
  padding-left: 17px;
}

.task {
  position: relative;
  width: 32px;
  height: 50px;
  margin-right: 12px;
  padding: 14px 4px;
}

.task svg {
  width: 24px;
  height: 24px;
}

.run::after, .cur::after {
  content: "";
  position: absolute;
  left: 13px;
  bottom: 5px;
  width: 6px;
  height: 3px;
  border-radius: 2px;
  background: #888;
}

.cur::after {
  left: 8px;
  width: 16px;
  background: #0a6cd0;
}

.cur {
  background: linear-gradient(#ccc, #ccc) 0 45px/32px 1px no-repeat;
}

.tray {
  display: flex;
  align-items: center;
  gap: 8px;
  margin-left: auto;
  padding: 2px 20px 0 0;
}

.tray span {
  margin: 0 8px 2px 4px;
  width: 16px;
  font-size: 16px;
}

.tray span + span {
  margin: 0 14px 2px 8px;
}

.chev {
  width: 12px;
  margin-right: 2px;
}

.clock {
  text-align: right;
  margin-left: 6px;
}
```
